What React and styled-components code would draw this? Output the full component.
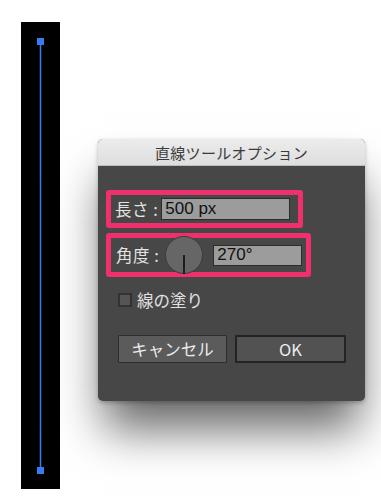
import React from 'react';
import styled, { createGlobalStyle } from 'styled-components';

const GlobalStyle = createGlobalStyle`
  html, body {
    margin: 0;
    padding: 0;
    background: #fff;
  }
  body {
    font-family: "Noto Sans CJK JP", "Liberation Sans", sans-serif;
  }
`;

const Page = styled.div`
  display: flex;
  align-items: flex-start;
  gap: 38px;
  padding: 22px 0 0 21px;
  width: 381px;
  height: 500px;
  box-sizing: border-box;
  overflow: hidden;
`;

const Artboard = styled.div`
  width: 39px;
  height: 467px;
  background: #000;
  flex: none;
`;

const Dialog = styled.div`
  margin-top: 117px;
  width: 267px;
  background: #474747;
  border-radius: 5px;
  overflow: hidden;
  box-shadow: 0 34px 44px -6px rgba(0, 0, 0, 0.6), 0 2px 4px rgba(0, 0, 0, 0.25);
`;

const TitleBar = styled.div`
  height: 27px;
  background: linear-gradient(#ececec, #dedede);
  border-bottom: 1px solid #bcbcbc;
  box-sizing: border-box;
  display: flex;
  align-items: center;
  justify-content: center;
  font-size: 15px;
  color: #3a3a3a;
  letter-spacing: 0.3px;
`;

const Body = styled.div`
  display: flex;
  flex-direction: column;
  align-items: flex-start;
  padding: 24px 0 38px 8px;
`;

const Highlight = styled.div`
  display: flex;
  align-items: center;
  width: ${p => p.$w}px;
  height: ${p => p.$h}px;
  margin-top: ${p => p.$top || 0}px;
  padding-left: ${p => p.$pad}px;
  box-sizing: border-box;
  outline: 5px solid #f0306c;
  outline-offset: -5px;
  border-radius: 3px;
`;

const Label = styled.span`
  font-size: 16.5px;
  color: #e4e4e4;
  white-space: nowrap;
  letter-spacing: 0.5px;
`;

const Field = styled.div`
  width: ${p => p.$w}px;
  height: ${p => p.$h}px;
  margin-left: ${p => p.$ml}px;
  box-sizing: border-box;
  background: #9c9c9c;
  border: 1px solid #2c2c2c;
  display: flex;
  align-items: center;
  padding-left: 3px;
  font-family: "Liberation Sans", Arial, sans-serif;
  font-size: 17px;
  color: #111;
`;

const Dial = styled.div`
  position: relative;
  width: 38px;
  height: 38px;
  margin-left: 6px;
  border-radius: 50%;
  background: #666;
  border: 1px solid #3c3c3c;
  box-sizing: border-box;
  flex: none;

  &::after {
    content: "";
    position: absolute;
    left: 17px;
    top: 18px;
    width: 2px;
    height: 19px;
    background: #1e1e1e;
  }
`;

const CheckRow = styled.label`
  display: flex;
  align-items: center;
  gap: 5px;
  margin: 11px 0 0 12px;
  font-size: 16.5px;
  color: #e0e0e0;
`;

const CheckBox = styled.span`
  width: 14px;
  height: 14px;
  box-sizing: border-box;
  background: #555;
  border: 2px solid #333;
`;

const Buttons = styled.div`
  display: flex;
  gap: 8px;
  margin: 23px 0 0 12px;
`;

const Button = styled.button`
  width: ${p => p.$w}px;
  height: 28px;
  box-sizing: border-box;
  border: ${p => (p.$primary ? '2px solid #232323' : '1px solid #2e2e2e')};
  background: ${p => (p.$primary ? '#525252' : '#5b5b5b')};
  color: #ececec;
  font-family: "Noto Sans CJK JP", "Liberation Sans", sans-serif;
  font-size: 16.5px;
  padding: 0;
  border-radius: 1px;
`;

function Line() {
  return (
    <svg width="39" height="467" viewBox="0 0 39 467">
      <line x1="19.5" y1="19" x2="19.5" y2="448" stroke="#3b7bf0" strokeWidth="1.5" />
      <rect x="16" y="16" width="7" height="7" fill="#3b7bf0" />
      <rect x="16" y="445" width="7" height="7" fill="#3b7bf0" />
    </svg>
  );
}

export default function App() {
  return (
    <>
      <GlobalStyle />
      <Page>
        <Artboard>
          <Line />
        </Artboard>
        <Dialog>
          <TitleBar>直線ツールオプション</TitleBar>
          <Body>
            <Highlight $w={197} $h={38} $pad={9}>
              <Label>長さ :</Label>
              <Field $w={129} $h={22} $ml={3}>500 px</Field>
            </Highlight>
            <Highlight $w={205} $h={44} $pad={10} $top={5}>
              <Label>角度 :</Label>
              <Dial />
              <Field $w={89} $h={21} $ml={10}>270°</Field>
            </Highlight>
            <CheckRow>
              <CheckBox />
              線の塗り
            </CheckRow>
            <Buttons>
              <Button $w={109}>キャンセル</Button>
              <Button $w={111} $primary>OK</Button>
            </Buttons>
          </Body>
        </Dialog>
      </Page>
    </>
  );
}
